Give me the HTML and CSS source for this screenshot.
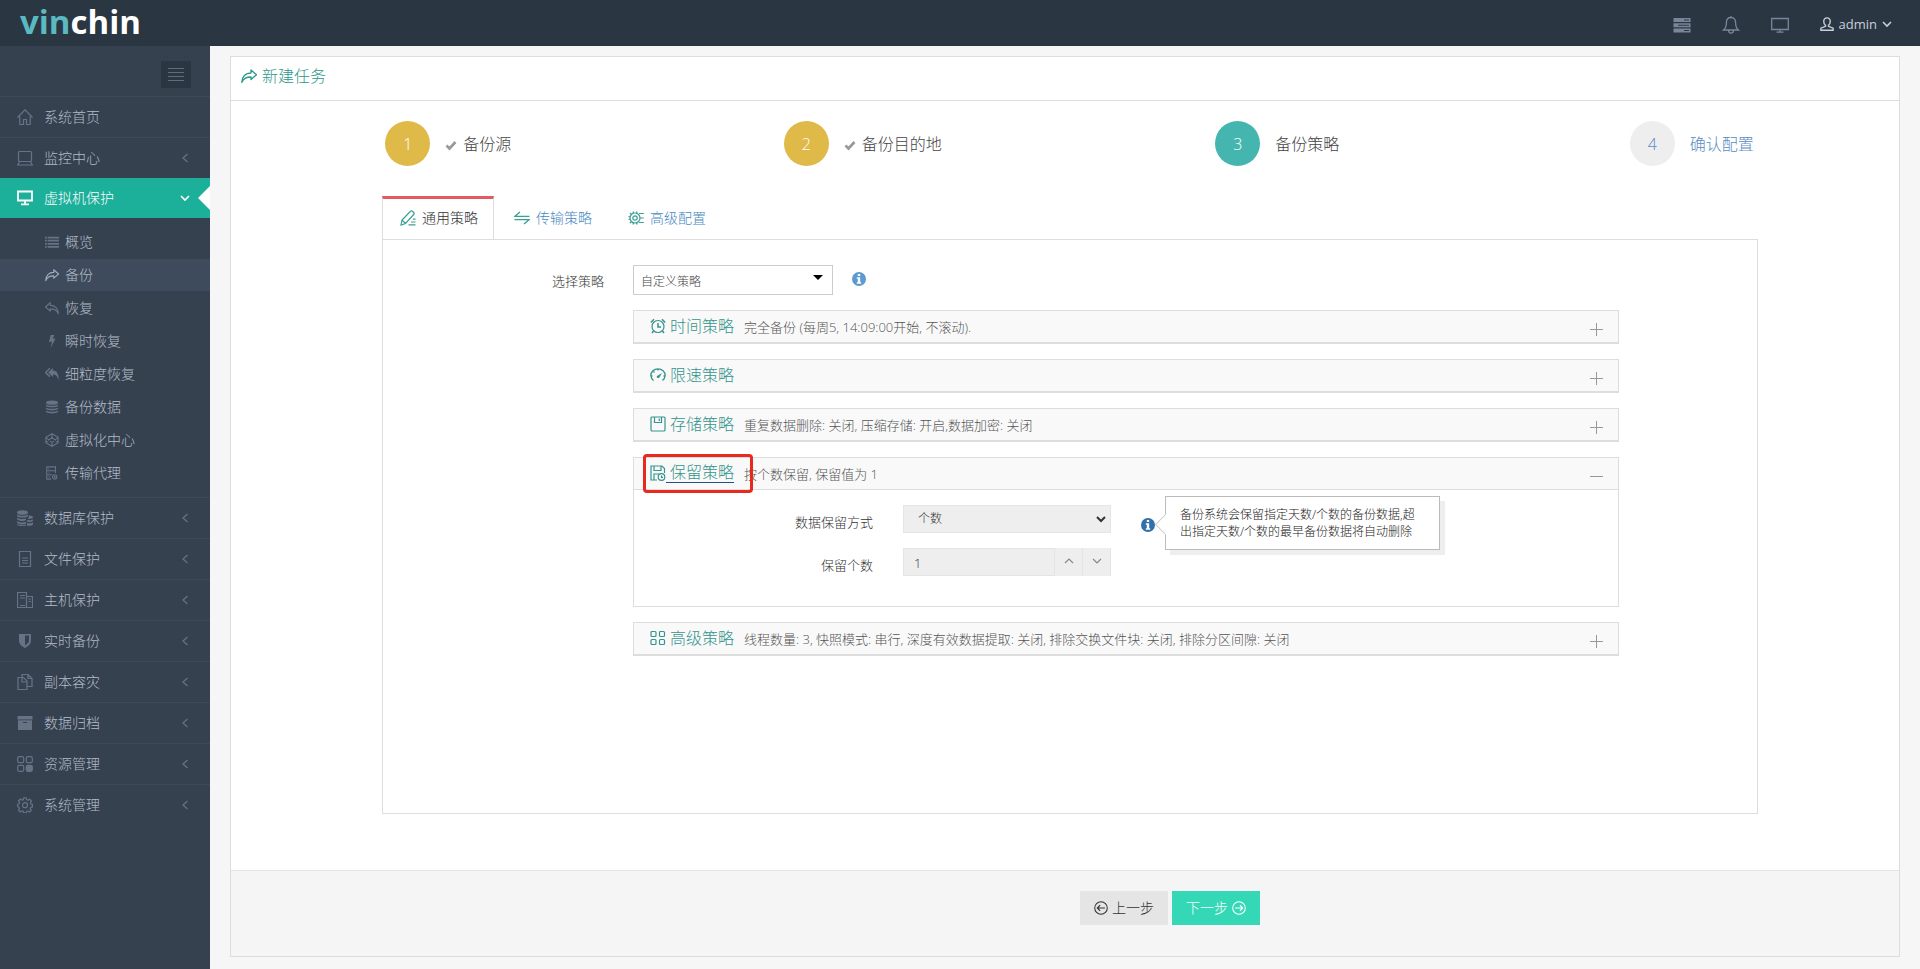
FILE: index.html
```html
<!DOCTYPE html>
<html lang="zh-CN">
<head>
<meta charset="utf-8">
<title>新建任务</title>
<link rel="stylesheet" href="styles.css">
</head>
<body>
<svg class="sprite" aria-hidden="true">
  <symbol id="i-home" viewBox="0 0 16 16"><path d="M.5 8.500 8 .8l7.500 7.700M2.800 7.500v8h3.700v-5h3v5h3.700v-8" /></symbol>
  <symbol id="i-laptop" viewBox="0 0 16 16"><rect x="1.500" y="1.500" width="13" height="10" rx="1"/><path d="M2.500 12 .6 15h14.800l-1.900-3"/></symbol>
  <symbol id="i-desktop" viewBox="0 0 16 16"><path d="M1 1.500h14v9H1zM8 10.500V14M4 14.300h8" stroke-width="1.800"/></symbol>
  <symbol id="i-list" viewBox="0 0 16 16"><path d="M0 3h2M3 3h13M0 6.500h2M3 6.500h13M0 10h2M3 10h13M0 13.500h2M3 13.500h13" stroke-width="2"/></symbol>
  <symbol id="i-share" viewBox="0 0 16 16"><path d="M10 2 15.500 6.800 10 11.500V9C5.500 9 2.500 10 .8 14.500.8 8.500 4.500 5 10 5z" stroke-width="1.300" stroke-linejoin="round"/></symbol>
  <symbol id="i-reply" viewBox="0 0 16 16"><path d="M6 2 .5 6.800 6 11.500V9c4.500 0 7.500 1 9.200 5.500 0-6-3.700-9.500-9.200-9.500z" stroke-width="1.300" stroke-linejoin="round"/></symbol>
  <symbol id="i-bolt" viewBox="0 0 16 16"><path d="M6.500 1h4L9 5.500l3-.5-5.500 11L8 8.500l-3.500.8z" fill="currentColor" stroke="none"/></symbol>
  <symbol id="i-replyall" viewBox="0 0 16 16"><path d="M5.500 1.500.7 6.300l4.800 4.700" stroke-width="1.600"/><path d="M9 1 3.500 6.300 9 11.500V8.700c3.500 0 5 1.800 6.500 6.300C16 8.500 14 4.200 9 4z" fill="currentColor" stroke="none"/></symbol>
  <symbol id="i-db" viewBox="0 0 16 16"><path d="M1 3a7 2.500 0 0 1 14 0 7 2.500 0 0 1-14 0zM1 5c2 2 12 2 14 0v1.500c-2 2.500-12 2.500-14 0zM1 8.500c2 2 12 2 14 0V10c-2 2.500-12 2.500-14 0zM1 12c2 2 12 2 14 0v1.500c-2 2.500-12 2.500-14 0z" fill="currentColor" stroke="none"/></symbol>
  <symbol id="i-cube" viewBox="0 0 16 16"><path d="M8 .8 15 5v6l-7 4.200L1 11V5zM8 .8V5M8 15.200V11M1 5l7 6 7-6M1 11l7-6 7 6"/></symbol>
  <symbol id="i-agent" viewBox="0 0 16 16"><path d="M7 15H2V1h10v7M2 5.500h10M2 10h6M4 3.300h1M4 7.800h1M4 12.500h2"/><circle cx="11" cy="12.500" r="2.500"/><circle cx="11" cy="12.500" r=".6"/></symbol>
  <symbol id="i-dbs" viewBox="0 0 16 16"><path d="M0 2.500a5.500 2.300 0 0 1 11 0 5.500 2.300 0 0 1-11 0zM0 4.500c2 1.800 9 1.800 11 0V6C9 8 2 8 0 6zM0 7.500c2 1.800 7 1.800 9 1V10c-2 1.500-7 1.500-9-1zM0 11c2 1.800 7 1.800 9 1v1.500c-2 1.500-7 1.500-9-1zM0 14c2 1.500 7 1.500 9 .5v1c-2 1-7 1-9-.5zM12 5.500c2 0 4 .8 4 1.800s-2 1.700-5 1.700zM10 10c2 .5 5 .3 6-.8v1.500c-1 1.300-4 1.600-6 1.100zM10 13c2 .5 5 .3 6-.8v2.300c-1 1.300-4 1.600-6 1.100z" fill="currentColor" stroke="none"/></symbol>
  <symbol id="i-file" viewBox="0 0 16 16"><path d="M2.500.5h11v15h-11zM5 7h6M5 9.500h6M5 12h6"/></symbol>
  <symbol id="i-host" viewBox="0 0 16 16"><path d="M.5.500h9v15h-9zM9.500 4.500h6v11h-6M3 3.500h5M3 6h5M3 13.500h5M11.500 7h2.500M11.500 9.500h2.500"/></symbol>
  <symbol id="i-shield" viewBox="0 0 16 16"><path d="M14 1H2v6.500c0 4 3.500 6 6 7.500 2.500-1.500 6-3.500 6-7.500zM8 2.500h4v5c0 2-2 3.500-4 5z" fill="currentColor" fill-rule="evenodd" stroke="none"/></symbol>
  <symbol id="i-copy" viewBox="0 0 16 16"><path d="M5 3.500H1v12h9v-3M5 .5h6l4 4v8h-5V7L6.500 3.500H5zM11 .5v4h4M5 3.500V8h5"/></symbol>
  <symbol id="i-archive" viewBox="0 0 16 16"><path d="M.5 1h15v3.500H.5zM1 5.200h14V15H1zM6 7v1h4V7z" fill="currentColor" fill-rule="evenodd" stroke="none"/></symbol>
  <symbol id="i-tiles" viewBox="0 0 16 16"><rect x=".7" y=".7" width="6" height="6" rx="1.500"/><rect x="9.300" y=".7" width="6" height="6" rx="1.500"/><rect x=".7" y="9.300" width="6" height="6" rx="1.500"/><rect x="9.300" y="9.300" width="6" height="6" rx="1.500" fill="currentColor"/></symbol>
  <symbol id="i-gear" viewBox="0 0 16 16"><path d="M6.700.8h2.600l.4 1.900 1.300.6 1.700-1.100 1.800 1.900-1.100 1.600.5 1.300 1.500.4v2.500l-1.600.4-.6 1.300 1.100 1.700-1.900 1.800-1.600-1.100-1.300.5-.4 1.300H6.700l-.4-1.400-1.300-.5-1.700 1.100-1.800-1.900 1.100-1.600-.6-1.300L.6 9.600V7.200l1.500-.5.5-1.300L1.500 3.800 3.400 2 5 3.200l1.300-.6z" stroke-linejoin="round"/><circle cx="8" cy="8.200" r="2.500"/></symbol>
  <symbol id="i-left" viewBox="0 0 8 10"><path d="M6.500 1 2 5l4.500 4"/></symbol>
  <symbol id="i-down" viewBox="0 0 10 10"><path d="m1 3 4 4 4-4"/></symbol>
  <symbol id="i-up" viewBox="0 0 10 10"><path d="m1 7 4-4 4 4"/></symbol>
  <symbol id="i-servers" viewBox="0 0 18 18"><path d="M.5 2h17v4H.5zM11 3.500v1h5v-1zM.5 7.200h17v4H.5zM5 8.700v1h11v-1zM.5 12.400h17v4H.5zM11 13.900v1h5v-1z" fill="currentColor" fill-rule="evenodd" stroke="none"/></symbol>
  <symbol id="i-bell" viewBox="0 0 18 18"><path d="M9 1.500c-3 0-4.600 2-4.600 5 0 4-.9 6-2.800 7.500h14.800c-1.900-1.500-2.800-3.500-2.800-7.500 0-3-1.600-5-4.600-5zM6.500 14.500c.3 3.500 4.700 3.500 5 0M9 0v1.500" stroke-width="1.300"/></symbol>
  <symbol id="i-monitor" viewBox="0 0 18 18"><path d="M.7 2.500h16.600v11H.7zM9 13.500v2.500M5.500 16.200h7" stroke-width="1.300"/></symbol>
  <symbol id="i-user" viewBox="0 0 16 16"><path d="M8 1C5.500 1 4.300 2.700 4.300 5c0 2 .7 3.500 2 4.400v1.300L1 12.800v2.400h14v-2.400l-5.300-2.100V9.400c1.300-.9 2-2.400 2-4.400C11.700 2.700 10.500 1 8 1z" stroke-width="1.600"/></symbol>
  <symbol id="i-check" viewBox="0 0 12 12"><path d="m1.500 6.500 3 3 6-6.500" stroke-width="2.600"/></symbol>
  <symbol id="i-pen" viewBox="0 0 16 16"><path d="M1 15l1-5L10.500 1.300q1-.9 2 0l1.200 1.200q.9 1 0 2L5.500 13.500zM2 10l3.500 3.500M8.500 14.800h7M11 12h4.500M12.800 9.200h2.700"/></symbol>
  <symbol id="i-swap" viewBox="0 0 16 16"><path d="M6 2 1 6.300h14.500M10 14l5-4.300H.5" stroke-width="1.300"/></symbol>
  <symbol id="i-cog" viewBox="0 0 16 16"><circle cx="7" cy="8" r="5"/><circle cx="7" cy="8" r="2.200"/><path d="m5 1.500.5 2M9 1.500l-.5 2M5 14.500l.5-2M9 14.500l-.5-2M.5 6.500l2 .5M.5 9.500l2-.5M2 3l1.500 1.500M2 13l1.500-1.500M11 3.500h4.800M12 8h3.800M11 12.500h4.800"/></symbol>
  <symbol id="i-clock" viewBox="0 0 16 16"><circle cx="8" cy="8.500" r="6"/><path d="M8 5v4h3M.8 4.500 4 1.200M15.200 4.500 12 1.200M3.500 13 2 15M12.500 13l1.500 2" stroke-width="1.500"/></symbol>
  <symbol id="i-gauge" viewBox="0 0 16 16"><path d="M3.500 13.500A7.200 7.200 0 0 1 .8 8.500a7.200 6.700 0 0 1 14.400 0 7.200 7.200 0 0 1-2.700 5M8 2v1.500M1 9h1.500M13.500 9H15M3.500 4.500l1 1" stroke-width="1.300"/><path d="m12 6-2.600 4.600c-1.200 1.200-3.600.1-2.400-1.600z" fill="currentColor" stroke="none"/></symbol>
  <symbol id="i-save" viewBox="0 0 16 16"><rect x="1" y="1" width="14" height="14" rx="1"/><path d="M4.500 1v5.500h7V1M9.300 2.500v2.500" stroke-width="1.200"/></symbol>
  <symbol id="i-saveclock" viewBox="0 0 16 16"><path d="M7 15H1V1h11l2.500 2.500V8M4 1v4.500h7V1M4 15V9h5"/><circle cx="11.500" cy="12" r="3.300"/><path d="M11.500 10.500v1.800h1.500"/></symbol>
  <symbol id="i-grid" viewBox="0 0 16 16"><rect x="1" y="1.500" width="5" height="5" rx="1"/><rect x="9.500" y="1.500" width="5" height="5" rx="1"/><rect x="1" y="9.500" width="5" height="5" rx="1"/><rect x="9.500" y="9.500" width="5" height="5" rx="1"/></symbol>
  <symbol id="i-info" viewBox="0 0 14 14"><path d="M7 0a7 7 0 1 1 0 14A7 7 0 0 1 7 0zM5.800 2v2h2.400V2zM4.800 5.200v1.500h1v3.600h-1v1.500h4.400v-1.500h-1V5.200z" fill="currentColor" fill-rule="evenodd" stroke="none"/></symbol>
  <symbol id="i-prev" viewBox="0 0 16 16"><circle cx="8" cy="8" r="7.200"/><path d="M12.500 8H4M7 4.800 3.800 8 7 11.200" stroke-width="1.300"/></symbol>
  <symbol id="i-next" viewBox="0 0 16 16"><circle cx="8" cy="8" r="7.200"/><path d="M3.500 8H12M9 4.800 12.200 8 9 11.200" stroke-width="1.300"/></symbol>
</svg>

<header class="topbar">
  <a class="logo" href="#"><span class="logo-accent">vin</span>chin</a>
  <nav class="topnav">
    <a href="#" aria-label="任务"><svg class="icon icon-lg"><use href="#i-servers"/></svg></a>
    <a href="#" aria-label="告警"><svg class="icon icon-lg"><use href="#i-bell"/></svg></a>
    <a href="#" aria-label="监控"><svg class="icon icon-lg"><use href="#i-monitor"/></svg></a>
    <a class="user" href="#"><svg class="icon icon-sm"><use href="#i-user"/></svg>admin<svg class="icon icon-xs"><use href="#i-down"/></svg></a>
  </nav>
</header>

<div class="layout">
  <aside class="sidebar">
    <div class="toggle-row"><button class="toggle" type="button" aria-label="折叠菜单"><span class="toggle-bars"></span></button></div>
    <ul class="menu">
      <li><a class="menu-link" href="#"><svg class="icon"><use href="#i-home"/></svg><span>系统首页</span></a></li>
      <li><a class="menu-link" href="#"><svg class="icon"><use href="#i-laptop"/></svg><span>监控中心</span><svg class="icon arrow"><use href="#i-left"/></svg></a></li>
      <li class="open">
        <a class="menu-link active" href="#"><svg class="icon"><use href="#i-desktop"/></svg><span>虚拟机保护</span><svg class="icon arrow"><use href="#i-down"/></svg></a>
        <ul class="submenu">
          <li><a href="#"><svg class="icon icon-sm"><use href="#i-list"/></svg>概览</a></li>
          <li><a class="current" href="#"><svg class="icon icon-sm"><use href="#i-share"/></svg>备份</a></li>
          <li><a href="#"><svg class="icon icon-sm"><use href="#i-reply"/></svg>恢复</a></li>
          <li><a href="#"><svg class="icon icon-sm"><use href="#i-bolt"/></svg>瞬时恢复</a></li>
          <li><a href="#"><svg class="icon icon-sm"><use href="#i-replyall"/></svg>细粒度恢复</a></li>
          <li><a href="#"><svg class="icon icon-sm"><use href="#i-db"/></svg>备份数据</a></li>
          <li><a href="#"><svg class="icon icon-sm"><use href="#i-cube"/></svg>虚拟化中心</a></li>
          <li><a href="#"><svg class="icon icon-sm"><use href="#i-agent"/></svg>传输代理</a></li>
        </ul>
      </li>
      <li><a class="menu-link" href="#"><svg class="icon"><use href="#i-dbs"/></svg><span>数据库保护</span><svg class="icon arrow"><use href="#i-left"/></svg></a></li>
      <li><a class="menu-link" href="#"><svg class="icon"><use href="#i-file"/></svg><span>文件保护</span><svg class="icon arrow"><use href="#i-left"/></svg></a></li>
      <li><a class="menu-link" href="#"><svg class="icon"><use href="#i-host"/></svg><span>主机保护</span><svg class="icon arrow"><use href="#i-left"/></svg></a></li>
      <li><a class="menu-link" href="#"><svg class="icon"><use href="#i-shield"/></svg><span>实时备份</span><svg class="icon arrow"><use href="#i-left"/></svg></a></li>
      <li><a class="menu-link" href="#"><svg class="icon"><use href="#i-copy"/></svg><span>副本容灾</span><svg class="icon arrow"><use href="#i-left"/></svg></a></li>
      <li><a class="menu-link" href="#"><svg class="icon"><use href="#i-archive"/></svg><span>数据归档</span><svg class="icon arrow"><use href="#i-left"/></svg></a></li>
      <li><a class="menu-link" href="#"><svg class="icon"><use href="#i-tiles"/></svg><span>资源管理</span><svg class="icon arrow"><use href="#i-left"/></svg></a></li>
      <li><a class="menu-link" href="#"><svg class="icon"><use href="#i-gear"/></svg><span>系统管理</span><svg class="icon arrow"><use href="#i-left"/></svg></a></li>
    </ul>
  </aside>

  <main class="content">
    <section class="panel">
      <h1 class="panel-title"><svg class="icon"><use href="#i-share"/></svg>新建任务</h1>

      <form class="panel-form">
        <ol class="steps">
          <li class="step done"><span class="num">1</span><svg class="icon check"><use href="#i-check"/></svg>备份源</li>
          <li class="step done"><span class="num">2</span><svg class="icon check"><use href="#i-check"/></svg>备份目的地</li>
          <li class="step active"><span class="num">3</span>备份策略</li>
          <li class="step"><span class="num">4</span>确认配置</li>
        </ol>

        <div class="tabbox">
          <div class="tabs">
            <a class="tab selected" href="#"><svg class="icon"><use href="#i-pen"/></svg>通用策略</a>
            <a class="tab" href="#"><svg class="icon"><use href="#i-swap"/></svg>传输策略</a>
            <a class="tab" href="#"><svg class="icon"><use href="#i-cog"/></svg>高级配置</a>
          </div>
          <div class="tab-body">
            <label class="main-label" for="policy">选择策略</label>
            <div class="policy-row">
              <span class="policy-select"><select id="policy"><option>自定义策略</option></select></span>
              <svg class="icon info"><use href="#i-info"/></svg>
            </div>

            <div class="accordion">
              <section class="acc">
                <div class="acc-head"><a href="#"><svg class="icon"><use href="#i-clock"/></svg>时间策略</a><span class="desc">完全备份 (每周5, 14:09:00开始, 不滚动).</span><span class="sign plus"></span></div>
              </section>
              <section class="acc">
                <div class="acc-head"><a href="#"><svg class="icon"><use href="#i-gauge"/></svg>限速策略</a><span class="sign plus"></span></div>
              </section>
              <section class="acc">
                <div class="acc-head"><a href="#"><svg class="icon"><use href="#i-save"/></svg>存储策略</a><span class="desc">重复数据删除: 关闭, 压缩存储: 开启,数据加密: 关闭</span><span class="sign plus"></span></div>
              </section>
              <section class="acc expanded">
                <div class="acc-head"><a class="marked" href="#"><svg class="icon"><use href="#i-saveclock"/></svg><span class="hovered">保留策略</span></a><span class="desc">按个数保留, 保留值为 1</span><span class="sign"></span></div>
                <div class="acc-body">
                  <label for="mode">数据保留方式</label>
                  <div class="field">
                    <span class="mode-select"><select id="mode"><option>个数</option></select><svg class="icon icon-xs"><use href="#i-down"/></svg></span>
                    <span class="hint"><svg class="icon info info-dark"><use href="#i-info"/></svg>
                      <span class="tip" role="tooltip">备份系统会保留指定天数/个数的备份数据,超<br>出指定天数/个数的最早备份数据将自动删除</span>
                    </span>
                  </div>
                  <label for="count">保留个数</label>
                  <div class="field">
                    <span class="spinner"><input id="count" type="text" value="1"><button type="button" aria-label="增加"><svg class="icon icon-xs"><use href="#i-up"/></svg></button><button type="button" aria-label="减少"><svg class="icon icon-xs"><use href="#i-down"/></svg></button></span>
                  </div>
                </div>
              </section>
              <section class="acc">
                <div class="acc-head"><a href="#"><svg class="icon"><use href="#i-grid"/></svg>高级策略</a><span class="desc">线程数量: 3, 快照模式: 串行, 深度有效数据提取: 关闭, 排除交换文件块: 关闭, 排除分区间隙: 关闭</span><span class="sign plus"></span></div>
              </section>
            </div>
          </div>
        </div>

        <div class="actions">
          <button class="btn" type="button"><svg class="icon icon-sm"><use href="#i-prev"/></svg>上一步</button>
          <button class="btn btn-next" type="button">下一步<svg class="icon icon-sm"><use href="#i-next"/></svg></button>
        </div>
      </form>
    </section>
  </main>
</div>
</body>
</html>
```

FILE: styles.css
```css
* { box-sizing: border-box; }

body {
  margin: 0;
  min-height: 100vh;
  display: flex;
  flex-direction: column;
  background: #f6f6f6;
  color: #333;
  font: 300 14px/20px "Open Sans", "Noto Sans CJK SC", sans-serif;
}

a { color: inherit; text-decoration: none; }
ul, ol { list-style: none; margin: 0; padding: 0; }
button, input, select { font: inherit; color: inherit; border-radius: 0; margin: 0; }
select { appearance: none; }

.sprite { display: none; }
.icon { width: 16px; height: 16px; flex: none; fill: none; stroke: currentColor; stroke-width: 1.2; }
.icon-lg { width: 18px; height: 18px; }
.icon-sm { width: 14px; height: 14px; }
.icon-xs { width: 10px; height: 10px; }

/* top bar */
.topbar {
  height: 46px;
  display: flex;
  align-items: center;
  justify-content: space-between;
  padding: 0 28px 0 20px;
  background: #2b3643;
}
.logo { color: #fff; font-size: 33px; line-height: 40px; font-weight: 700; padding-bottom: 2px; }
.logo-accent { color: #5ab9c1; }
.topnav { display: flex; align-items: center; color: #79869a; padding-top: 4px; }
.topnav a { display: flex; margin-right: 31px; }
.topnav .user { align-items: center; gap: 5px; margin: 0 0 2px; color: #c6cfda; font-size: 13px; font-weight: 400; }
.user .icon-xs { stroke-width: 1.6; }

.layout { flex: 1; display: flex; }

/* sidebar */
.sidebar { width: 210px; flex: none; background: #364150; color: #b4bcc8; }
.toggle-row { display: flex; justify-content: flex-end; padding: 15px 19px 8px 0; }
.toggle { width: 30px; height: 27px; padding: 0 7px; border: 0; background: #2b3643; display: flex; align-items: center; }
.toggle-bars {
  flex: 1;
  height: 13px;
  background: repeating-linear-gradient(#606c7d 0 1px, transparent 1px 4px);
}
.menu-link {
  height: 41px;
  display: flex;
  align-items: center;
  gap: 11px;
  padding: 0 21px 1px 17px;
  border-top: 1px solid #3d4957;
}
.menu-link .icon { color: #677385; }
.menu-link .arrow { width: 8px; height: 10px; margin-left: auto; }
.menu-link.active {
  position: relative;
  height: 40px;
  border-top: 0;
  background: #1caf9a;
  color: #fff;
  padding-right: 20px;
}
.menu-link.active .icon { color: #fff; }
.menu-link.active .arrow { width: 10px; stroke-width: 1.6; }
.menu-link.active::after {
  content: "";
  position: absolute;
  right: 0;
  top: 8px;
  border: 12px solid transparent;
  border-left-width: 0;
  border-right-color: #fff;
}
.submenu { padding: 8px 0 7px; }
.submenu a { display: flex; align-items: center; gap: 6px; height: 32px; margin-bottom: 1px; padding-left: 45px; }
.submenu .icon { color: #677385; }
.submenu .current { background: #3e4b5c; }
.submenu .current .icon { color: #a0acbb; }

/* task panel */
.content { flex: 1; min-width: 0; display: flex; padding: 10px 20px 12px; }
.panel { flex: 1; min-width: 0; display: flex; flex-direction: column; background: #fff; border: 1px solid #ddd; }
.panel-title {
  display: flex;
  align-items: center;
  gap: 5px;
  height: 44px;
  margin: 0;
  padding: 0 10px 6px;
  border-bottom: 1px solid #ddd;
  color: #2c978a;
  font-size: 16px;
  font-weight: 300;
}
.panel-form { flex: 1; display: flex; flex-direction: column; }

.steps { display: grid; grid-template-columns: repeat(4, 1fr); padding: 20px 0 30px 10px; }
.step { display: flex; align-items: center; justify-content: center; color: #5a8cc2; font-size: 16px; }
.num {
  width: 45px;
  height: 45px;
  margin-right: 15px;
  border-radius: 50%;
  display: flex;
  align-items: center;
  justify-content: center;
  background: #eee;
}
.step.done, .step.active { color: #444; }
.done .num { background: #dfba49; color: #fff; }
.active .num { background: #45b6af; color: #fff; }
.check { width: 12px; height: 12px; margin: 2px 6px 0 0; color: #999; }

.tabbox { flex: 1; display: flex; flex-direction: column; margin: 0 141px 56px 151px; }
.tabs { display: flex; gap: 2px; }
.tab {
  display: flex;
  align-items: center;
  gap: 6px;
  height: 43px;
  padding: 0 16px 0 18px;
  color: #4788c2;
}
.tab .icon { color: #3aa093; }
.tab.selected {
  height: 44px;
  margin-bottom: -1px;
  padding: 0 15px 3px 17px;
  border: 1px solid #ddd;
  border-top: 3px solid #e05b62;
  border-bottom: 0;
  background: #fff;
  color: #333;
}
.tab-body {
  flex: 1;
  display: grid;
  grid-template-columns: 221px 1fr;
  grid-template-rows: auto 1fr;
  column-gap: 29px;
  row-gap: 13px;
  padding: 25px 138px 20px 0;
  border: 1px solid #ddd;
}
.main-label { text-align: right; font-size: 13px; line-height: 32px; }
.policy-row { display: flex; align-items: flex-start; gap: 19px; }
.policy-select { position: relative; width: 200px; }
.policy-select select {
  display: block;
  width: 100%;
  height: 30px;
  padding: 3px 7px 0;
  border: 1px solid #ccc;
  background: #fff;
  color: #444;
  font-size: 12px;
}
.policy-select::after {
  content: "";
  position: absolute;
  right: 10px;
  top: 10px;
  border: 5px solid transparent;
  border-top-color: #000;
  border-bottom-width: 0;
  pointer-events: none;
}
.info { width: 14px; height: 14px; color: #5b9bd1; }
.policy-row .info { margin-top: 7px; }
.info-dark { color: #3071a9; }

/* accordion */
.accordion { grid-column: 2; display: flex; flex-direction: column; gap: 15px; }
.acc { border: 1px solid #ddd; border-bottom-width: 2px; }
.acc-head {
  display: flex;
  align-items: center;
  gap: 10px;
  height: 31px;
  padding: 0 15px 2px 16px;
  background: #f9f9f9;
}
.acc-head a { display: flex; align-items: center; gap: 4px; color: #36948d; font-size: 16px; }
.desc { padding-top: 2px; font-size: 13px; color: #555; }
.sign { position: relative; width: 13px; height: 13px; margin: 7px 0 0 auto; }
.sign::before, .plus::after { content: ""; position: absolute; background: #999; }
.sign::before { left: 0; right: 0; top: 6px; height: 1px; }
.plus::after { top: 0; bottom: 0; left: 6px; width: 1px; }
.acc-head .marked { position: relative; }
.marked::after {
  content: "";
  position: absolute;
  inset: -9px -19px -10px -7px;
  border: 3px solid #e8291d;
  border-radius: 4px;
}
.hovered { margin-left: -4px; padding-left: 4px; border-bottom: 1px solid #23527c; line-height: 19px; }
.expanded { border-bottom-width: 1px; }
.acc-body {
  display: grid;
  grid-template-columns: 239px 1fr;
  column-gap: 30px;
  row-gap: 15px;
  padding: 15px 0 30px;
  border-top: 1px solid #ddd;
}
.acc-body label { text-align: right; font-size: 13px; line-height: 34px; height: 28px; }
.field { display: flex; align-items: center; gap: 30px; font-size: 12px; }
.mode-select { position: relative; width: 208px; }
.mode-select select { display: block; width: 100%; height: 28px; padding: 0 14px; border: 1px solid #e5e5e5; background: #eee; }
.mode-select .icon { position: absolute; right: 5px; top: 9px; stroke-width: 2; pointer-events: none; }
.hint { position: relative; display: flex; padding-top: 12px; }
.tip {
  position: absolute;
  left: 24px;
  top: -10px;
  padding: 9px 24px 9px 14px;
  border: 1px solid #bbb;
  background: #fff;
  box-shadow: 5px 5px 0 #eee;
  color: #222;
  line-height: 17px;
  white-space: nowrap;
}
.tip::before {
  content: "";
  position: absolute;
  left: -8px;
  top: 20px;
  width: 14px;
  height: 14px;
  border: 1px solid #ccc;
  border-width: 0 0 1px 1px;
  background: #fff;
  transform: rotate(45deg);
}
.spinner { display: flex; width: 208px; height: 28px; }
.spinner input { flex: 1; min-width: 0; padding: 2px 10px 0; border: 1px solid #e5e5e5; background: #eee; font-size: 13px; }
.spinner button {
  width: 28px;
  padding: 0;
  border: 0;
  border-right: 1px solid #e5e5e5;
  background: #eee;
  color: #888;
}

/* footer */
.actions {
  display: flex;
  justify-content: center;
  gap: 4px;
  padding: 20px 0 31px 210px;
  border-top: 1px solid #e5e5e5;
  background: #f5f5f5;
}
.btn {
  display: flex;
  align-items: center;
  gap: 4px;
  height: 34px;
  padding: 0 14px;
  border: 0;
  background: #e5e5e5;
}
.btn-next { background: #35d8b6; color: #fff; }
```
